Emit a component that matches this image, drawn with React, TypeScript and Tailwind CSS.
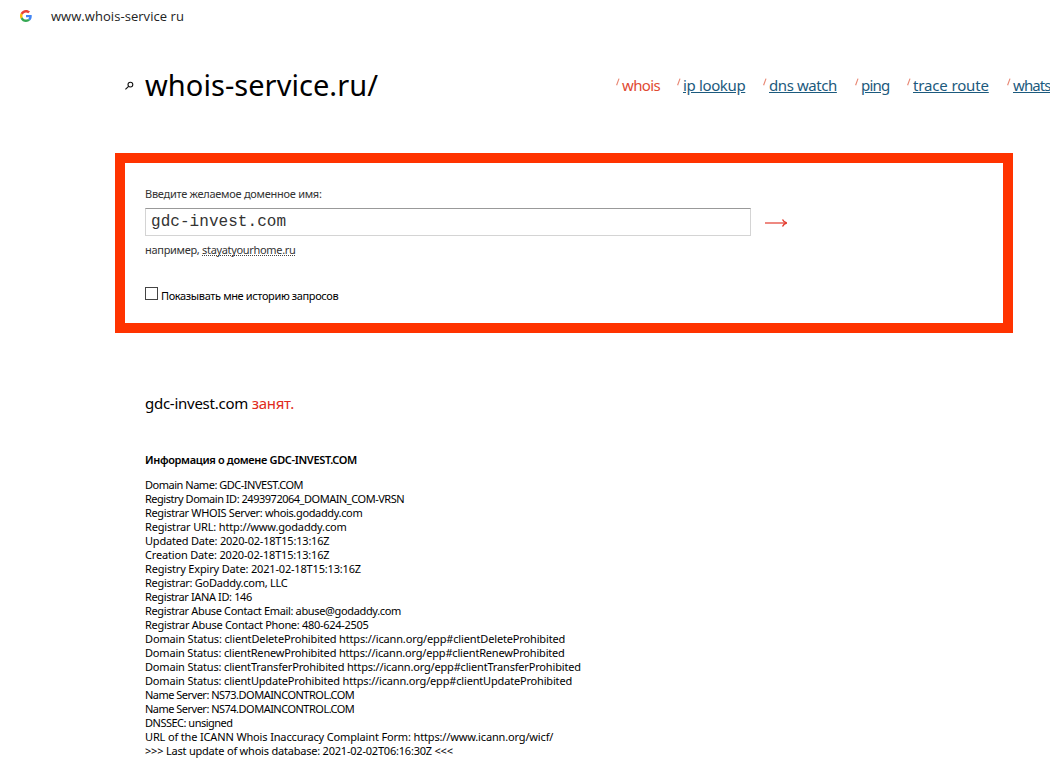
import { useState } from 'react';

const NAV = [
  { label: 'ip lookup', gap: 'ml-[17px]', cls: 'w-[62px] tracking-[-0.36px]' },
  { label: 'dns watch', gap: 'ml-[18px]', cls: 'w-[68px] tracking-[-0.42px]' },
  { label: 'ping', gap: 'ml-[18px]', cls: 'w-[28px] tracking-[-0.75px]' },
  { label: 'trace route', gap: 'ml-[18px]', cls: 'w-[76px] tracking-[-0.15px]' },
  { label: 'whats', gap: 'ml-[18px]', cls: 'w-[37px] tracking-[-0.9px]' },
];

const RECORD = [
  { text: 'Domain Name: GDC-INVEST.COM', cls: 'tracking-[-0.48px]' },
  { text: 'Registry Domain ID: 2493972064_DOMAIN_COM-VRSN', cls: 'tracking-[-0.48px]' },
  { text: 'Registrar WHOIS Server: whois.godaddy.com', cls: 'tracking-[-0.35px]' },
  { text: 'Registrar URL: http://www.godaddy.com', cls: 'tracking-[-0.16px]' },
  { text: 'Updated Date: 2020-02-18T15:13:16Z', cls: 'tracking-[-0.2px]' },
  { text: 'Creation Date: 2020-02-18T15:13:16Z', cls: 'tracking-[-0.17px]' },
  { text: 'Registry Expiry Date: 2021-02-18T15:13:16Z', cls: 'tracking-[-0.17px]' },
  { text: 'Registrar: GoDaddy.com, LLC', cls: 'tracking-[-0.26px]' },
  { text: 'Registrar IANA ID: 146', cls: 'tracking-[-0.38px]' },
  { text: 'Registrar Abuse Contact Email: abuse@godaddy.com', cls: 'tracking-[-0.35px]' },
  { text: 'Registrar Abuse Contact Phone: 480-624-2505', cls: 'tracking-[-0.3px]' },
  { text: 'Domain Status: clientDeleteProhibited https://icann.org/epp#clientDeleteProhibited', cls: 'tracking-[-0.15px]' },
  { text: 'Domain Status: clientRenewProhibited https://icann.org/epp#clientRenewProhibited', cls: 'tracking-[-0.185px]' },
  { text: 'Domain Status: clientTransferProhibited https://icann.org/epp#clientTransferProhibited', cls: 'tracking-[-0.175px]' },
  { text: 'Domain Status: clientUpdateProhibited https://icann.org/epp#clientUpdateProhibited', cls: 'tracking-[-0.175px]' },
  { text: 'Name Server: NS73.DOMAINCONTROL.COM', cls: 'tracking-[-0.51px]' },
  { text: 'Name Server: NS74.DOMAINCONTROL.COM', cls: 'tracking-[-0.51px]' },
  { text: 'DNSSEC: unsigned', cls: 'tracking-[-0.5px]' },
  { text: 'URL of the ICANN Whois Inaccuracy Complaint Form: https://www.icann.org/wicf/', cls: 'tracking-[-0.15px]' },
  { text: '>>> Last update of whois database: 2021-02-02T06:16:30Z <<<', cls: 'tracking-[-0.21px]' },
];

function GoogleIcon() {
  return (
    <svg width="12" height="12" viewBox="0 0 48 48">
      <path fill="#EA4335" d="M24 9.5c3.54 0 6.71 1.22 9.21 3.6l6.85-6.85C35.9 2.38 30.47 0 24 0 14.62 0 6.51 5.38 2.56 13.22l7.98 6.19C12.43 13.72 17.74 9.5 24 9.5z" />
      <path fill="#4285F4" d="M46.98 24.55c0-1.57-.15-3.09-.38-4.55H24v9.02h12.94c-.58 2.96-2.26 5.48-4.78 7.18l7.73 6c4.51-4.18 7.09-10.36 7.09-17.65z" />
      <path fill="#FBBC05" d="M10.53 28.59A14.5 14.5 0 0 1 9.77 24c0-1.6.27-3.14.76-4.59l-7.98-6.19A24 24 0 0 0 0 24c0 3.88.92 7.54 2.56 10.78l7.97-6.19z" />
      <path fill="#34A853" d="M24 48c6.48 0 11.93-2.13 15.89-5.81l-7.73-6c-2.15 1.45-4.92 2.3-8.16 2.3-6.26 0-11.57-4.22-13.47-9.91l-7.98 6.19C6.51 42.62 14.62 48 24 48z" />
    </svg>
  );
}

function Slash() {
  return (
    <svg className="mr-[2px] mt-1 shrink-0" width="4" height="8" viewBox="0 0 4 8">
      <path d="M3 .6L.6 7.2" stroke="#e88470" strokeWidth="1.1" fill="none" />
    </svg>
  );
}

export default function App() {
  const [domain, setDomain] = useState('gdc-invest.com');
  const [history, setHistory] = useState(false);

  return (
    <div className="h-[769px] w-[1050px] overflow-hidden bg-white font-['Noto_Sans',sans-serif] text-black">
      <div className="flex h-8 items-center pl-5">
        <GoogleIcon />
        <span className="ml-[19px] whitespace-nowrap font-['Open_Sans',sans-serif] text-[13px] leading-4 tracking-[0.05px] text-[#222]">
          www.whois-service ru
        </span>
      </div>

      <header className="flex h-[121px] pt-[33px]">
        <svg className="ml-[125px] mt-4 shrink-0" width="10" height="10" viewBox="0 0 10 10" fill="none" stroke="#111">
          <circle cx="5.4" cy="3.6" r="2.4" strokeWidth="1.1" />
          <path d="M3.6 5.4L.4 8.4" strokeWidth="1.2" />
        </svg>
        <h1 className="ml-[10px] w-[240px] shrink-0 whitespace-nowrap text-[29px] leading-10 tracking-[0.05px]">whois-service.ru/</h1>
        <nav className="ml-[231px] flex whitespace-nowrap pt-[9px] text-[15px] leading-[22px]">
          <div className="flex">
            <Slash />
            <span className="w-[38px] tracking-[-0.65px] text-[#df4a32]">whois</span>
          </div>
          {NAV.map(({ label, cls, gap }) => (
            <div key={label} className={`flex shrink-0 ${gap}`}>
              <Slash />
              <a href="#" className={`text-[#1c5a7d] underline ${cls}`}>{label}</a>
            </div>
          ))}
        </nav>
      </header>

      <form
        className="ml-[115px] h-[180px] w-[898px] border-[10px] border-[#ff3300] pl-5 pt-[23px] text-[11px] leading-4"
        onSubmit={e => e.preventDefault()}
      >
        <label htmlFor="domain" className="block tracking-[-0.27px] text-[#333]">Введите желаемое доменное имя:</label>
        <div className="mt-[6px] flex items-center">
          <input
            id="domain"
            value={domain}
            onChange={e => setDomain(e.target.value)}
            className="h-7 w-[606px] border border-[#d4d4d4] border-t-[#999] px-[5px] font-['Liberation_Mono',monospace] text-[16px] tracking-[0.05px] text-[#333] outline-none"
          />
          <button type="submit" className="ml-[13px] mt-[2px]" aria-label="whois">
            <svg width="24" height="10" viewBox="0 0 24 10" fill="none" stroke="#e33b2e">
              <path d="M1 5H22" strokeWidth="1.2" />
              <path d="M18.5 1.5Q19.8 4.3 22.8 5Q19.8 5.7 18.5 8.5" strokeWidth="1.4" />
            </svg>
          </button>
        </div>
        <p className="mt-[6px] text-[#333]">
          <span className="tracking-[-0.3px]">например, </span>
          <a href="#" className="inline-block h-[14px] border-b border-dotted border-[#444] tracking-[-0.33px]">stayatyourhome.ru</a>
        </p>
        <label className="mt-[28px] flex items-start">
          <input
            type="checkbox"
            checked={history}
            onChange={e => setHistory(e.target.checked)}
            className="mt-px size-[13px] appearance-none border border-[#444] bg-white"
          />
          <span className="ml-[3px] mt-[2px] whitespace-nowrap tracking-[-0.37px]">Показывать мне историю запросов</span>
        </label>
      </form>

      <main className="ml-[145px] whitespace-nowrap">
        <p className="mt-[59px] text-[15px] leading-[22px] tracking-[-0.26px]">
          gdc-invest.com <span className="text-[#df2b20]">занят.</span>
        </p>
        <h2 className="mt-[38px] text-[11px] font-semibold leading-4 tracking-[-0.34px]">Информация о домене GDC-INVEST.COM</h2>
        <div className="mt-[10px] text-[11px] leading-[14px]">
          {RECORD.map(({ text, cls }) => (
            <div key={text} className={cls}>{text}</div>
          ))}
        </div>
      </main>
    </div>
  );
}
